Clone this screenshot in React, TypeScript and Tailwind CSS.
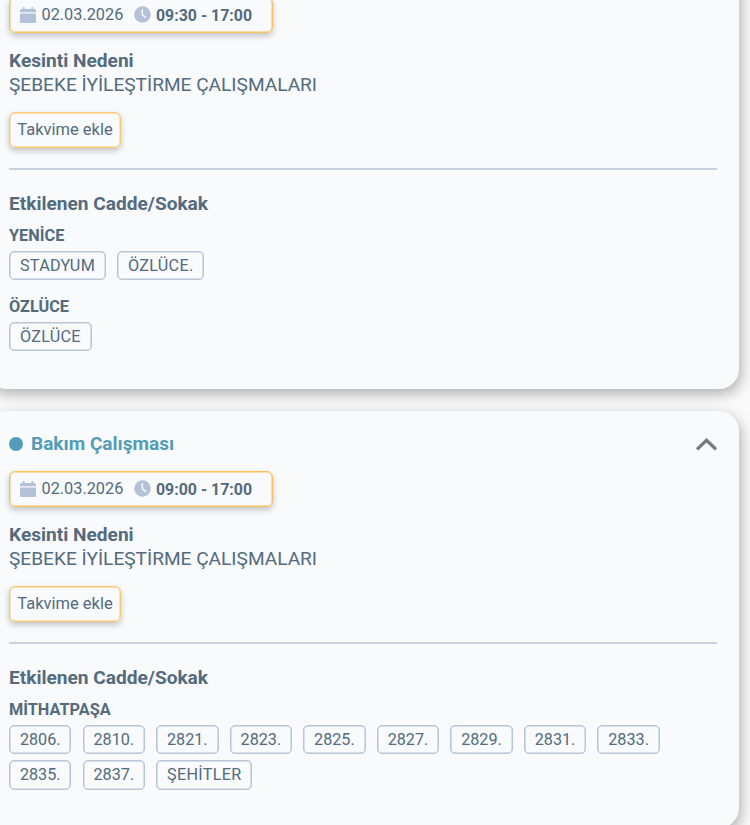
import type { ReactNode } from 'react';

const FONT = 'font-["Roboto","Noto_Sans",sans-serif]';

function CalendarIcon() {
  return (
    <svg className="h-[16px] w-4 shrink-0 fill-[#b3c2d8]" viewBox="0 0 16 16">
      <path d="M1.500 2H2.800V.8a.9.9 0 0 1 1.800 0V2h6.800V.8a.9.9 0 0 1 1.800 0V2h1.300A1.500 1.500 0 0 1 16 3.500V5.300H0V3.500A1.500 1.500 0 0 1 1.500 2ZM0 6.400h16v8.100a1.500 1.500 0 0 1-1.500 1.500h-13A1.500 1.500 0 0 1 0 14.500Z" />
    </svg>
  );
}

function ClockIcon() {
  return (
    <svg className="size-[17px] shrink-0" viewBox="0 0 17 17">
      <circle cx="8.500" cy="8.500" r="8.300" fill="#b3c2d8" />
      <path d="M8.300 3.800v5l3.200 2.600" fill="none" stroke="#f8fafc" strokeWidth="1.500" strokeLinecap="round" />
    </svg>
  );
}

function Chip({ children }: { children: ReactNode }) {
  const numeric = /^\d/.test(String(children));
  return (
    <span
      className={`flex h-[29.5px] items-center rounded-[5px] border border-[#b6c5da] px-[9.9px] pt-[1.5px] text-[16.2px] whitespace-nowrap shadow-[inset_0_0_0_0.5px_#b6c5da] ${numeric ? 'tracking-normal' : 'tracking-[0.3px]'}`}
    >
      {children}
    </span>
  );
}

type Area = { name: string; streets: string[] };

function Outage({ time, areas, title }: { time: string; areas: Area[]; title?: string }) {
  return (
    <section className="w-[752px] shrink-0 rounded-[20px] bg-[#f8fafc] px-[22px] pb-[38px] shadow-[2px_5px_14px_rgba(0,0,0,0.3)]">
      <header className="flex h-[59.5px] items-center pt-[6px]">
        {title && (
          <>
            <span className="size-[14px] rounded-full bg-[#549bb8]" />
            <h2 className="ml-[8px] text-[19.05px] font-bold leading-6 text-[#549bb8]">{title}</h2>
            <svg className="ml-auto h-[14px] w-[22px]" viewBox="0 0 22 14">
              <path d="M2 12.300 11.500 3.300 21 12.300" fill="none" stroke="#6f7b85" strokeWidth="3.200" />
            </svg>
          </>
        )}
      </header>
      <div className="flex h-[36px] w-[264px] items-center rounded-[6px] border border-[#fac05e] pl-[10px] text-[16.3px] shadow-[inset_0_0_0_0.5px_#fac05e,0_3px_6px_rgba(0,0,0,0.22)]">
        <CalendarIcon />
        <span className="ml-[5.5px] w-[83px] pt-[2px]">02.03.2026</span>
        <span className="ml-[9.5px] flex"><ClockIcon /></span>
        <span className="ml-[5px] pt-[2px] text-[15.9px] font-bold">{time}</span>
      </div>
      <h3 className="mt-[16px] text-[19.1px] font-bold leading-6">Kesinti Nedeni</h3>
      <p className="text-[19.1px] leading-6">ŞEBEKE İYİLEŞTİRME ÇALIŞMALARI</p>
      <button className="mt-[15px] flex h-[36.5px] w-[112px] items-center justify-center rounded-[6px] border border-[#fac875] pt-[2px] text-[16.5px] shadow-[inset_0_0_0_0.5px_#fac875,0_3px_6px_rgba(0,0,0,0.22)]">
        Takvime ekle
      </button>
      <hr className="mt-[20px] w-[708px] border-t-2 border-[#c6d2e1]" />
      <h3 className="mt-[21.5px] text-[19.1px] font-bold leading-6">Etkilenen Cadde/Sokak</h3>
      <div className="mt-[8px] flex flex-col gap-[14.5px]">
        {areas.map((area) => (
          <div key={area.name}>
            <h4 className="text-[16.3px] font-bold leading-[24px]">{area.name}</h4>
            <div className="mt-[3px] flex max-w-[665px] flex-wrap gap-x-[11.1px] gap-y-[6px]">
              {area.streets.map((street) => (
                <Chip key={street}>{street}</Chip>
              ))}
            </div>
          </div>
        ))}
      </div>
    </section>
  );
}

export default function App() {
  return (
    <main className={`${FONT} h-[825px] w-[750px] overflow-hidden bg-[#fafafb] text-[#536b7d]`}>
      <div className="-ml-[13px] -mt-[63px] flex flex-col gap-[22px]">
        <Outage
          time="09:30 - 17:00"
          areas={[
            { name: 'YENİCE', streets: ['STADYUM', 'ÖZLÜCE.'] },
            { name: 'ÖZLÜCE', streets: ['ÖZLÜCE'] },
          ]}
        />
        <Outage
          title="Bakım Çalışması"
          time="09:00 - 17:00"
          areas={[
            {
              name: 'MİTHATPAŞA',
              streets: ['2806.', '2810.', '2821.', '2823.', '2825.', '2827.', '2829.', '2831.', '2833.', '2835.', '2837.', 'ŞEHİTLER'],
            },
          ]}
        />
      </div>
    </main>
  );
}
